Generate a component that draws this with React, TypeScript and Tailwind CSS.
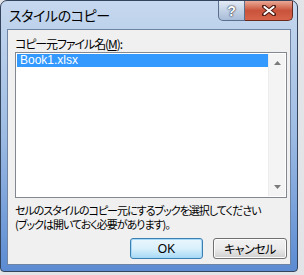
import React from 'react';

const jp = "font-['Noto_Sans_CJK_JP',sans-serif] [font-feature-settings:'palt']";

const ArrowUp = () => (
  <svg width="7" height="4" viewBox="0 0 7 4">
    <path d="M0 4 L3.5 0 L7 4 Z" fill="#7a7a7a" />
  </svg>
);

const ArrowDown = () => (
  <svg width="7" height="4" viewBox="0 0 7 4">
    <path d="M0 0 L3.5 4 L7 0 Z" fill="#7a7a7a" />
  </svg>
);

const TitleButtons: React.FC = () => (
  <div className="flex mr-[4px]">
    <div className="w-[27px] h-[20px] border border-[#5a6f8e] border-t-0 rounded-bl-[5px] bg-gradient-to-b from-[#e3ebf5] via-[#c3d2e6] to-[#a9bdd8] flex items-center justify-center">
      <span className="font-['Liberation_Sans',sans-serif] font-bold text-[14px] leading-none text-white [text-shadow:0_0_2px_#223,0_0_1px_#223]">?</span>
    </div>
    <div className="w-[48px] h-[20px] border border-[#6b2a1e] border-t-0 border-l-0 rounded-br-[5px] bg-gradient-to-b from-[#e9a896] via-[#c9533b] to-[#d7634a] flex items-center justify-center">
      <svg width="14" height="11" viewBox="0 0 14 11">
        <path d="M2 1.5 L12 9.5 M12 1.5 L2 9.5" stroke="#4a1810" strokeWidth="4" strokeLinecap="round" />
        <path d="M2.5 2 L11.5 9 M11.5 2 L2.5 9" stroke="#ffffff" strokeWidth="2.2" strokeLinecap="round" />
      </svg>
    </div>
  </div>
);

const ListBox: React.FC = () => (
  <div className="ml-[7px] mr-[3px] h-[146px] border border-[#828790] bg-white flex p-[1px]">
    <div className="flex-1 flex flex-col">
      <div className="h-[13px] bg-[#3399ff] text-white font-['Liberation_Sans',sans-serif] text-[12px] leading-[13px] pl-[3px]">
        Book1.xlsx
      </div>
    </div>
    <div className="w-[17px] bg-[#f4f4f4] border-l border-[#ececec] flex flex-col items-center justify-between py-[7px]">
      <ArrowUp />
      <ArrowDown />
    </div>
  </div>
);

export default function App() {
  return (
    <div className="w-[304px] h-[275px] bg-[#e2e4e7] overflow-hidden">
      <div className="w-[298px] h-[272px] rounded-t-[7px] rounded-b-[4px] border border-[#34445c] bg-gradient-to-b from-[#c6d8ee] via-[#9dbbe3] to-[#5b8bd2] flex flex-col">
        <div className="h-[28px] flex items-start justify-between">
          <div className={`${jp} text-[14px] leading-none tracking-[-0.4px] text-black pl-[8px] pt-[7px]`}>
            スタイルのコピー
          </div>
          <TitleButtons />
        </div>
        <div className="flex-1 mx-[6px] mb-[6px] border border-[#6f83a3] bg-[#f0f0f0] flex flex-col">
          <div className={`${jp} text-[12px] leading-[14px] tracking-[-1.1px] text-black ml-[7px] mt-[7px] mb-[1px] whitespace-nowrap`}>
            コピー元ファイル名(<span className="underline">M</span>):
          </div>
          <ListBox />
          <p className={`${jp} text-[11px] leading-[14px] tracking-[-1px] text-black ml-[7px] mt-[5px] whitespace-nowrap`}>
            セルのスタイルのコピー元にするブックを選択してください<br />(ブックは開いておく必要があります)。
          </p>
          <div className="flex justify-end gap-[10px] mr-[3px] mt-[7px]">
            <button className="w-[73px] h-[21px] rounded-[3px] border border-[#3c7fb1] bg-gradient-to-b from-[#eaf6fd] via-[#d9f0fc] to-[#a7d9f5] shadow-[inset_0_0_0_1px_#a6d8f7] font-['Liberation_Sans',sans-serif] text-[12px] text-black">
              OK
            </button>
            <button className={`w-[74px] h-[21px] rounded-[3px] border border-[#707070] bg-gradient-to-b from-[#f2f2f2] via-[#ebebeb] to-[#cfcfcf] shadow-[inset_0_0_0_1px_#fcfcfc] ${jp} text-[12px] tracking-[-0.5px] text-black`}>
              キャンセル
            </button>
          </div>
        </div>
      </div>
    </div>
  );
}
